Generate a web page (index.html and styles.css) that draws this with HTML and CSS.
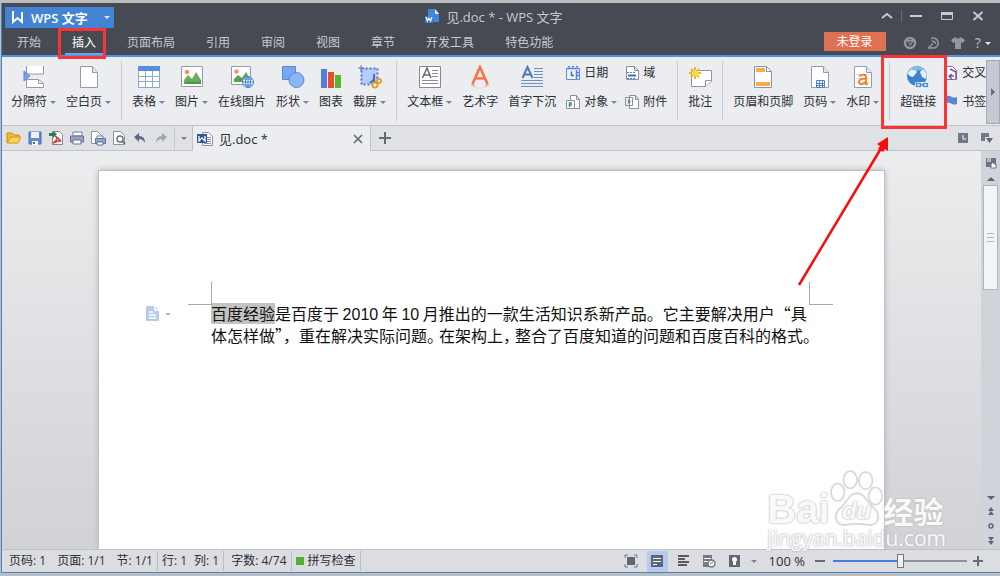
FILE: index.html
```html
<!DOCTYPE html>
<html lang="zh-CN">
<head>
<meta charset="utf-8">
<title>见.doc * - WPS 文字</title>
<link rel="stylesheet" href="styles.css">
</head>
<body>
<div class="window">
  <header class="header">
    <div class="titlebar">
      <button class="brand"><svg width="13" height="13" viewBox="0 0 13 13"><path d="M2 0v11l4.500-4 4.500 4V1" fill="none" stroke="#fff" stroke-width="2"/></svg><span>WPS 文字</span><i class="caret"></i></button>
      <div class="title"><svg width="15" height="15" viewBox="0 0 15 15"><path d="M3 0h7l4 4v9H3z" fill="#4287dc"/><path d="M10 0l4 5h-4z" fill="#e6f0ff"/><path d="M0 7h8v7H0z" fill="#367ad0"/><path d="M1 8l1.500 4L4 9l1.500 3L7 8" fill="none" stroke="#fff" stroke-width="1.200"/></svg><span>见.doc * - WPS 文字</span></div>
      <div class="controls">
        <button aria-label="收起功能区"><svg width="14" height="10" viewBox="0 0 14 10"><path d="M2 7l5-4 5 4" fill="none" stroke="#c5c9d0" stroke-width="2"/></svg></button>
        <span class="control-line"></span>
        <button aria-label="最小化"><svg width="14" height="10" viewBox="0 0 14 10"><path d="M1 5h12" stroke="#c5c9d0" stroke-width="2"/></svg></button>
        <button aria-label="最大化"><svg width="14" height="10" viewBox="0 0 14 10"><path d="M1.500 1.500h11v7h-11z" fill="none" stroke="#c5c9d0"/><path d="M1 2.500h12" stroke="#c5c9d0" stroke-width="3"/></svg></button>
        <button aria-label="关闭"><svg width="14" height="10" viewBox="0 0 14 10"><path d="M2.500 1l9 8M11.500 1l-9 8" stroke="#c5c9d0" stroke-width="2"/></svg></button>
      </div>
    </div>
    <div class="menubar">
      <nav class="tabs">
        <button>开始</button><button class="active">插入</button><button>页面布局</button><button>引用</button><button>审阅</button><button>视图</button><button>章节</button><button>开发工具</button><button>特色功能</button>
      </nav>
      <button class="login">未登录</button>
      <div class="tools">
        <button aria-label="应用"><svg width="14" height="14" viewBox="0 0 14 14"><circle cx="7" cy="7" r="5" fill="none" stroke="#92969e" stroke-width="2.500"/><path d="M3 4h8L7.500 10z" fill="#92969e"/><path d="M5 5.500h4L7 8z" fill="#464a52"/></svg></button>
        <button aria-label="同步"><svg width="14" height="14" viewBox="0 0 14 14"><path d="M4 2.500a5 5 0 1 1 0 9M1 12h5M1.500 11.500L6 7.500M4.500 5.500q4-1 4 2.500" fill="none" stroke="#92969e" stroke-width="1.600"/></svg></button>
        <button aria-label="皮肤"><svg width="14" height="14" viewBox="0 0 14 14"><path d="M4 1q3 3 6 0l4 3-2 3-2-1v7H4V6L2 7 0 4z" fill="#92969e"/></svg></button>
        <button aria-label="帮助" class="help">?<i class="caret"></i></button>
      </div>
    </div>
  </header>

  <section class="ribbon">
    <div class="ribbon-items">
      <button class="big"><svg width="24" height="24" viewBox="0 0 24 24"><path d="M4.500 1v8h17V1M4.500 22.500v-8h12l5 4v4z" fill="#fff" stroke="#9698ac"/><path d="M16.500 14.500v4h5" fill="none" stroke="#9698ac"/><path d="M2 6l6 5-6 5z" fill="#78a3ef" stroke="#5c86d6"/></svg><span>分隔符<i class="caret"></i></span></button>
      <button class="big"><svg width="24" height="24" viewBox="0 0 24 24"><path d="M3.500 1.500h12l5 6v15h-17z" fill="#fff" stroke="#9698ac"/><path d="M15.500 1.500v6h5" fill="#dfe1e9" stroke="#9698ac"/></svg><span>空白页<i class="caret"></i></span></button>
      <span class="line"></span>
      <button class="big"><svg width="24" height="24" viewBox="0 0 24 24"><path d="M1.500 2.500h21v20h-21z" fill="#fff" stroke="#8ba4d0"/><path d="M1 1h22v5H1z" fill="#568de0"/><path d="M1 11.500h22M1 16.500h22M8.500 6v17M15.500 6v17" stroke="#8eabd9"/></svg><span>表格<i class="caret"></i></span></button>
      <button class="big"><svg width="24" height="24" viewBox="0 0 24 24"><path d="M1.500 1.500h21v20h-21z" fill="#fff" stroke="#9698ac"/><circle cx="7" cy="7" r="2.300" fill="#fa8e61"/><path d="M4 19v-4l4-5 4 4 4-7 5 8v4z" fill="#6bad59"/><path d="M4 19c6-7 10 2 17-4v4z" fill="#449b4b"/></svg><span>图片<i class="caret"></i></span></button>
      <button class="big"><svg width="24" height="24" viewBox="0 0 24 24"><path d="M1.500 1.500h19v18h-19z" fill="#fff" stroke="#9698ac"/><circle cx="6.500" cy="6.500" r="2.200" fill="#fa8e61"/><path d="M4 17v-3l4-4 4 3 4-6 4 7v3z" fill="#55a353"/><circle cx="18" cy="17" r="5.500" fill="#fff" stroke="#427fce"/><path d="M13 17h10M18 12v10M14 14h8M14 20h8" stroke="#427fce"/><ellipse cx="18" cy="17" rx="2.500" ry="5" fill="none" stroke="#427fce"/></svg><span>在线图片</span></button>
      <button class="big"><svg width="24" height="24" viewBox="0 0 24 24"><path d="M1.500 1.500h13v13h-13z" fill="#76a7f0" stroke="#5288da"/><circle cx="15.500" cy="15" r="7.500" fill="#8bb6f5" stroke="#568bdc"/></svg><span>形状<i class="caret"></i></span></button>
      <button class="big"><svg width="24" height="24" viewBox="0 0 24 24"><path d="M2 4h6v19H2z" fill="#517fd9"/><path d="M9 7h6v16H9z" fill="#ed4c2c"/><path d="M16 10h6v13h-6z" fill="#59b52d"/></svg><span>图表</span></button>
      <button class="big"><svg width="24" height="24" viewBox="0 0 24 24"><path d="M3 3h16v16H3z" fill="#b5cdfa"/><path d="M3.500 3.500h16v16h-16z" fill="none" stroke="#5278c6" stroke-width="2" stroke-dasharray="2 2"/><path d="M3 0v6M0 3h6" stroke="#5278c6"/><path d="M16 9v6l-4 3M14 15l6 4" stroke="#446fbf" stroke-width="2" fill="none"/><circle cx="17" cy="20" r="2.500" fill="#fff" stroke="#e69e25" stroke-width="2"/><circle cx="21" cy="16" r="2" fill="#fff" stroke="#e69e25" stroke-width="2"/></svg><span>截屏<i class="caret"></i></span></button>
      <span class="line"></span>
      <button class="big"><svg width="24" height="24" viewBox="0 0 24 24"><path d="M1.500 1.500h21v21h-21z" fill="#fff" stroke="#85889a"/><path d="M4.500 13L9 3l4 10M6 10h6" fill="none" stroke="#676b78" stroke-width="1.500"/><path d="M14 5.500h6M14 8.500h6M14 11.500h6M4 15.500h16M4 18.500h16" stroke="#8a8e9c"/></svg><span>文本框<i class="caret"></i></span></button>
      <button class="big"><svg width="24" height="24" viewBox="0 0 24 24"><defs><linearGradient id="fade" x1="0" y1="0" x2="0" y2="1"><stop offset="0" stop-color="#f07248" stop-opacity=".6"/><stop offset="1" stop-color="#f07248" stop-opacity="0"/></linearGradient></defs><path d="M4.500 19L12 2l7.500 17M7 13.500h10" fill="none" stroke="#f3764c" stroke-width="2.600"/><path d="M3 19h3q1 4 6 4t6-4h3q-1 5-9 5t-9-5z" fill="url(#fade)"/></svg><span>艺术字</span></button>
      <button class="big"><svg width="24" height="24" viewBox="0 0 24 24"><path d="M2.500 13L7.500 2l5 11M4 9.500h7" fill="none" stroke="#5479b7" stroke-width="2"/><path d="M14 3.500h9M14 6.500h9M14 9.500h9M14 12.500h9M1 15.500h22M1 18.500h22M1 21.500h22" stroke="#7190c5"/></svg><span>首字下沉</span></button>
      <div class="pairs">
        <button class="small"><svg width="14" height="14" viewBox="0 0 14 14"><path d="M.5 2.500h13v11H.5z" fill="#edf4ff" stroke="#5e8cdc"/><path d="M1 2.500h12M2 .5h2M6 .5h2M10 .5h2M10.500 4v9M11 6.500h2M11 9.500h2" stroke="#5485db" stroke-width="1.500"/><path d="M5.500 5.500v4H8" fill="none" stroke="#496ead" stroke-width="1.500"/></svg><span>日期</span></button>
        <button class="small"><svg width="14" height="14" viewBox="0 0 14 14"><path d="M1.500.5h8l4 4v9h-12z" fill="#fff" stroke="#8b8da0"/><path d="M9.500.5v4h4" fill="none" stroke="#8b8da0"/><path d="M2 6.500h9M2 12.500h9" stroke="#5581d1" stroke-dasharray="2 1"/><path d="M3 9.500h8" stroke="#426dbd" stroke-width="2"/></svg><span>域</span></button>
        <button class="small"><svg width="14" height="14" viewBox="0 0 14 14"><path d="M4.500.5h6l3 4v9h-9z" fill="#fff" stroke="#8b8da0"/><path d="M10.500.5v4h3" fill="none" stroke="#8b8da0"/><path d="M.5 5.500h8v8h-8z" fill="#fff" stroke="#8b8da0"/><path d="M3.500 12V8H6M3 10h3" fill="none" stroke="#34a04c" stroke-width="1.500"/></svg><span>对象<i class="caret"></i></span></button>
        <button class="small"><svg width="14" height="14" viewBox="0 0 14 14"><path d="M4.500.5h6l3 4v9h-9z" fill="#fff" stroke="#8b8da0"/><path d="M10.500.5v4h3M.5 2.500h7v8h-7z" fill="none" stroke="#8b8da0"/><path d="M3 4l3 2.500L3 9z" fill="#787f94"/></svg><span>附件</span></button>
      </div>
      <span class="line"></span>
      <button class="big"><svg width="24" height="24" viewBox="0 0 24 24"><path d="M3.500 5.500h20v11l-6 5h-14z" fill="#fff" stroke="#9293a7"/><path d="M17.500 21.500v-6h6" fill="#fff" stroke="#9293a7"/><circle cx="7" cy="8" r="3" fill="#ffd84e"/><path d="M7 2v3M7 11v3M1 8h3M10 8h3M3 4l2 2M9 10l2 2M3 12l2-2M9 6l2-2" stroke="#efb81d" stroke-width="2"/></svg><span>批注</span></button>
      <span class="line"></span>
      <button class="big"><svg width="24" height="24" viewBox="0 0 24 24"><path d="M3.500 1.500h12l5 5v16h-17z" fill="#fff" stroke="#8f91a2"/><path d="M15.500 1.500v5h5" fill="none" stroke="#8f91a2"/><path d="M5 3h9v4H5zM5 17h14v4H5z" fill="#f5ac4c"/></svg><span>页眉和页脚</span></button>
      <button class="big"><svg width="24" height="24" viewBox="0 0 24 24"><path d="M3.500 1.500h12l5 6v15h-17z" fill="#fff" stroke="#9698ac"/><path d="M15.500 1.500v6h5" fill="#e5e7f0" stroke="#9698ac"/><path d="M8.500 15.500h8v7h-8zM11.500 15v8M14.500 15v8M8 18.500h9M8 20.500h9" fill="none" stroke="#507ed2"/></svg><span>页码<i class="caret"></i></span></button>
      <button class="big"><svg width="24" height="24" viewBox="0 0 24 24"><path d="M3.500 1.500h12l5 6v15h-17z" fill="#fff" stroke="#9698ac"/><path d="M15.500 1.500v6h5" fill="#e5e7f0" stroke="#9698ac"/><path d="M5 9.500h14M5 13.500h14M5 17.500h14" stroke="#dfdfe4"/><path d="M8 11q7-3 7 1v7M15 14q-7-1-7 3c0 4 6 2 7-1v3h2" fill="none" stroke="#ee8537" stroke-width="2"/></svg><span>水印<i class="caret"></i></span></button>
      <span class="line"></span>
      <button class="big"><svg width="24" height="24" viewBox="0 0 24 24"><circle cx="11" cy="11" r="10" fill="#3c83cf"/><path d="M2 8q3-6 9-6-2 3 0 5l-4 5q-5-1-5-4zM14 7l3-3q5 4 3 10l-4-2z" fill="#e4f3fd"/><path d="M4 4q7-6 14 0-7 3-14 0z" fill="#86bae9"/><rect x="9" y="17" width="14" height="6" rx="2" fill="#fff"/><path d="M10.500 18.500h4v3h-4zM17.500 18.500h4v3h-4zM14 20h4" fill="none" stroke="#4c89d0" stroke-width="1.500"/></svg><span>超链接</span></button>
      <div class="pairs last">
        <button class="small"><svg width="12" height="14" viewBox="0 0 12 14"><path d="M.5.500h6l4 4v9H.5z" fill="#fff" stroke="#8565ac"/><path d="M4 3l6 3v7M6 8l-3 2 3 3M3 10h5" fill="none" stroke="#7a56a4" stroke-width="1.500"/></svg><span>交叉</span></button>
        <button class="small"><svg width="12" height="14" viewBox="0 0 12 14"><path d="M0 1q3-1 6 1 2 1 5 0v7q-3 1-5 0-3-2-6-1z" fill="#5a86d7"/></svg><span>书签</span></button>
      </div>
    </div>
    <button class="ribbon-scroll" aria-label="更多"><svg width="4" height="8" viewBox="0 0 4 8"><path d="M0 0l4 4-4 4z" fill="#666c80"/></svg></button>
  </section>

  <div class="docbar">
    <div class="quick">
      <button aria-label="打开"><svg width="16" height="16" viewBox="0 0 16 16"><path d="M1 13V3h5l2 2h5v3" fill="#f4b72d" stroke="#d08a13"/><path d="M1 13l4-6h10l-3 6z" fill="#ffd35b" stroke="#d9951b"/></svg></button>
      <button aria-label="保存"><svg width="16" height="16" viewBox="0 0 16 16"><path d="M2 2h12v12H2z" fill="#638bd4" stroke="#456bb6"/><path d="M4 2h8v6H4z" fill="#e9f2ff"/><path d="M5 11h6v4H5z" fill="#fff"/><path d="M6 12h2v2H6z" fill="#45639a"/></svg></button>
      <button aria-label="输出为PDF"><svg width="16" height="16" viewBox="0 0 16 16"><path d="M4.500 1.500h7l3 3v10h-10z" fill="#fff" stroke="#85889a"/><path d="M7 6q4 2 6 6M9 7q0 4-4 6l8-3" fill="none" stroke="#dc3a3d" stroke-width="1.500"/><path d="M1 3h4V1l4 3-4 4V6H1z" fill="#268349"/></svg></button>
      <button aria-label="打印"><svg width="16" height="16" viewBox="0 0 16 16"><path d="M4 2h9v4H4z" fill="#fff" stroke="#73809c"/><path d="M1.500 6h13v6h-13z" fill="#98a5bf" stroke="#65748f"/><path d="M4 10h8v4H4z" fill="#fff" stroke="#65748f"/></svg></button>
      <button aria-label="打印文档"><svg width="16" height="16" viewBox="0 0 16 16"><path d="M1.500 1.500h6l4 4v8h-10z" fill="#fff" stroke="#8e92a4"/><path d="M7 6h6v3H7z" fill="#fff" stroke="#69809f"/><path d="M5.500 8.500h10v5h-10z" fill="#8da8d0" stroke="#58739d"/><path d="M7 12h6v3H7z" fill="#fff" stroke="#58739d"/></svg></button>
      <button aria-label="打印预览"><svg width="16" height="16" viewBox="0 0 16 16"><path d="M2.500 1.500h7l4 4v9h-11z" fill="#fff" stroke="#8e92a4"/><circle cx="9" cy="9" r="3" fill="#fff" stroke="#6d7382" stroke-width="1.500"/><path d="M11 11l3 3" stroke="#6d7382" stroke-width="2"/></svg></button>
      <button aria-label="撤销"><svg width="16" height="16" viewBox="0 0 16 16"><path d="M2 7l5-4v3q6 0 6 7-2-4-6-4v3z" fill="#596783"/></svg></button>
      <button aria-label="恢复"><svg width="16" height="16" viewBox="0 0 16 16"><path d="M14 7L9 3v3q-6 0-6 7 2-4 6-4v3z" fill="#a0a5b0"/></svg></button>
      <button class="more" aria-label="自定义"><i class="caret"></i></button>
    </div>
    <div class="doctab">
      <svg width="16" height="16" viewBox="0 0 16 16"><path d="M5.500 1.500h6l4 4v9h-10z" fill="#fff" stroke="#8e92a4"/><path d="M10 6.500h4M10 8.500h4M10 10.500h4M7 12.500h7" stroke="#8995af"/><path d="M0 3h10v9H0z" fill="#2e57a2"/><path d="M2 5v5l3-3 3 3V5" fill="none" stroke="#fff" stroke-width="1.300"/></svg>
      <span>见.doc *</span>
      <button aria-label="关闭标签"><svg width="10" height="10" viewBox="0 0 10 10"><path d="M1 1l8 8M9 1L1 9" stroke="#5f6778" stroke-width="1.600"/></svg></button>
    </div>
    <button class="newtab" aria-label="新建"><svg width="12" height="12" viewBox="0 0 12 12"><path d="M6 0v12M0 6h12" stroke="#626977" stroke-width="2"/></svg></button>
    <div class="docbar-end">
      <button aria-label="历史"><svg width="12" height="12" viewBox="0 0 12 12"><path d="M1 1h10v10H1z" fill="#717785"/><path d="M6 3v4h3" fill="none" stroke="#fff"/></svg></button>
      <button aria-label="标签列表"><svg width="12" height="12" viewBox="0 0 12 12"><path d="M0 1h8v4H4v4H0z" fill="#717785"/><path d="M5 6h7l-3.500 5z" fill="#5f6677"/></svg></button>
    </div>
  </div>

  <main class="workspace">
    <div class="canvas">
      <article class="page">
        <span class="crop crop-left"></span><span class="crop crop-right"></span>
        <button class="side-mark" aria-label="段落"><svg width="14" height="16" viewBox="0 0 14 16"><path d="M0 0h9l4 4v11H0z" fill="#b8cbea"/><path d="M9 0v4h4M3 6h4M3 9h7M3 12h7" fill="none" stroke="#fff" stroke-width="1.500"/></svg><i class="caret"></i></button>
        <p><mark>百度经验</mark>是百度于 <span class="latin">2010</span> 年 <span class="latin">10</span> 月推出的一款生活知识系新产品。它主要解决用户“具</p>
        <p>体怎样做<span class="half">”</span>，重在解决实际问题<span class="half stop">。</span>在架构上<span class="half stop">，</span>整合了百度知道的问题和百度百科的格式<span class="half stop">。</span></p>
      </article>
    </div>
    <div class="scrollbar">
      <svg width="12" height="12" viewBox="0 0 12 12"><path d="M1 1h10v9H1z" fill="#6b7182"/><path d="M3 1v4M5 1v4" stroke="#fff"/><path d="M6 11V7l2-2 1 2h2v4z" fill="#fff" stroke="#6b7182"/></svg>
      <i class="up"></i>
      <div class="thumb"><i></i><i></i><i></i></div>
      <div class="jump">
        <i class="down"></i>
        <svg width="8" height="8" viewBox="0 0 8 8"><path d="M1 4l3-4 3 4zM1 8l3-4 3 4z" fill="#5c657d"/></svg>
        <svg width="8" height="8" viewBox="0 0 8 8"><circle cx="4" cy="4" r="2" fill="none" stroke="#5c657d" stroke-width="1.500"/></svg>
        <svg width="8" height="8" viewBox="0 0 8 8"><path d="M1 0l3 4 3-4zM1 4l3 4 3-4z" fill="#5c657d"/></svg>
      </div>
    </div>
    <div class="watermark">
      <div class="wm-top"><span class="wm-bai">Bai</span><span class="wm-paw"><svg width="54" height="58" viewBox="1 1 56 58"><g fill="#fff" stroke="#dadada" stroke-width="2"><ellipse cx="9" cy="24" rx="7" ry="9"/><ellipse cx="22" cy="11" rx="7" ry="9"/><ellipse cx="38" cy="12" rx="7" ry="9"/><ellipse cx="48" cy="28" rx="7" ry="9"/><path d="M29 25c-8 0-10 9-17 15-8 7-6 18 4 18q13-2 26 0c10 0 12-11 4-18-7-6-9-15-17-15z"/></g></svg><b>du</b></span><span class="wm-cn">经验</span></div>
      <div class="wm-url">jingyan.baidu.com</div>
    </div>
  </main>

  <footer class="status">
    <div class="cell"><span>页码: 1</span><span>页面: 1/1</span><span>节: 1/1</span></div>
    <div class="cell near"><span>行: 1</span><span>列: 1</span></div>
    <div class="cell"><span>字数: 4/74</span></div>
    <div class="cell near"><button class="spell"><i></i>拼写检查</button></div>
    <div class="views">
      <button aria-label="全屏"><svg width="14" height="14" viewBox="0 0 14 14"><path d="M3 3h8v8H3z" fill="#606777"/><path d="M1 4V1h3M10 1h3v3M13 10v3h-3M4 13H1v-3" fill="none" stroke="#6f7583"/></svg></button>
      <button class="on" aria-label="页面视图"><svg width="14" height="14" viewBox="0 0 14 14"><path d="M1 1h12v12H1z" fill="#5c6579"/><path d="M3 4.500h8M3 7.500h8M3 10.500h4" stroke="#fff"/></svg></button>
      <button aria-label="大纲视图"><svg width="14" height="14" viewBox="0 0 14 14"><path d="M2 2h11M2 5h7M2 8h11M2 11h9" stroke="#2e3035" stroke-width="1.500"/></svg></button>
      <button aria-label="网页视图"><svg width="14" height="14" viewBox="0 0 14 14"><path d="M1 1h9v12H1z" fill="#747a88"/><path d="M2 4.500h7M2 7.500h4" stroke="#fff"/><circle cx="9.500" cy="9.500" r="3.500" fill="#fff" stroke="#737986" stroke-width="1.500"/><path d="M8 10l4-3" stroke="#737986"/></svg></button>
      <button aria-label="护眼模式"><svg width="14" height="14" viewBox="0 0 14 14"><path d="M1 1h11v12H1z" fill="#606777"/><circle cx="6.500" cy="5.500" r="2.500" fill="#fff"/><path d="M5 8h3v3H5z" fill="#fff"/></svg></button>
      <i class="caret"></i>
    </div>
    <label class="percent" for="zoom">100 %</label>
    <button class="step" aria-label="缩小"><svg width="10" height="10" viewBox="0 0 10 10"><path d="M0 5h10" stroke="#636b7d" stroke-width="2"/></svg></button>
    <input id="zoom" type="range" min="0" max="100" value="50">
    <button class="step" aria-label="放大"><svg width="10" height="10" viewBox="0 0 10 10"><path d="M0 5h10M5 0v10" stroke="#636b7d" stroke-width="2"/></svg></button>
  </footer>
  <svg class="notes" width="1000" height="300" viewBox="0 0 1000 300"><g fill="none" stroke="#fa3434" stroke-width="3"><path d="M59.500 29.500h45v28h-45zM882.500 56.500h63v71h-63z"/></g><path d="M799 285L883 145" stroke="#f80d0d" stroke-width="2.500"/><path d="M888 137v14l-3-2-2 3-5-3 2-3-3-2z" fill="#f80d0d"/></svg>
</div>
</body>
</html>
```
FILE: styles.css
```css
* { box-sizing: border-box; }
body {
  margin: 0;
  height: 100vh;
  padding: 3px 0 3px 1px;
  background: #bcbcbc;
  color: #2b2e35;
  font: 12px/16px "Open Sans", "Noto Sans CJK SC", sans-serif;
  overflow: hidden;
}
button {
  margin: 0;
  padding: 0;
  border: 0;
  background: none;
  color: inherit;
  font: inherit;
  white-space: nowrap;
}
svg { display: block; flex: none; }
.caret {
  display: inline-block;
  flex: none;
  border: 3px solid transparent;
  border-top-color: #7b8192;
  border-bottom: 0;
}
.window {
  display: flex;
  flex-direction: column;
  height: 100%;
  border-left: 1px solid #4585cf;
  border-bottom: 1px solid #4585cf;
}

.header {
  padding-top: 4px;
  background: #464a52;
  border-bottom: 2px solid #4f92e6;
  color: #c6c9cf;
}
.titlebar {
  display: grid;
  grid-template-columns: 1fr auto 1fr;
  height: 21px;
}
.brand {
  display: flex;
  align-items: center;
  justify-self: start;
  gap: 7px;
  margin-left: 3px;
  padding: 0 4px 0 6px;
  background: #4283d4;
  color: #fff;
  font-size: 13px;
  font-weight: 600;
}
.brand .caret { margin-left: 9px; }
.brand .caret, .help .caret { border-top-color: #e4e7ec; }
.title {
  display: flex;
  align-items: center;
  gap: 6px;
  height: 19px;
  padding-right: 14px;
  font-size: 13px;
}
.controls {
  display: flex;
  align-items: center;
  justify-content: flex-end;
  gap: 17px;
  height: 18px;
  padding-right: 15px;
}
.control-line {
  width: 1px;
  height: 12px;
  margin: 0 -10px;
  background: #646973;
}
.menubar {
  display: flex;
  align-items: center;
  height: 27px;
}
.tabs { display: flex; flex: 1; align-self: stretch; }
.tabs button { position: relative; padding: 3px 16px 0 15px; }
.tabs .active { color: #fff; }
.tabs .active::after {
  content: "";
  position: absolute;
  right: 8px;
  bottom: 0;
  left: 8px;
  height: 2px;
  background: #69a4f0;
}
.login {
  width: 62px;
  height: 19px;
  background: #df7052;
  color: #fff;
}
.tools {
  display: flex;
  align-items: center;
  gap: 10px;
  padding: 3px 9px 0 17px;
}
.help {
  display: flex;
  align-items: center;
  gap: 4px;
  color: #a3a7af;
  font-size: 14px;
  font-weight: 600;
}

.ribbon {
  display: flex;
  height: 68px;
  background: #ebedf0;
}
.ribbon-items {
  display: flex;
  flex: 1;
  min-width: 0;
  gap: 10px;
  padding: 8px 0 0 9px;
  overflow: hidden;
}
.big {
  display: flex;
  flex: none;
  flex-direction: column;
  align-items: center;
  gap: 5px;
  align-self: flex-start;
}
.big span, .small span {
  display: flex;
  align-items: center;
  gap: 3px;
}
.line {
  flex: none;
  width: 1px;
  height: 60px;
  margin-top: -4px;
  background: #c9ccd2;
}
.pairs {
  display: grid;
  flex: none;
  grid-template-columns: auto auto;
  grid-auto-rows: 16px;
  gap: 13px 8px;
  align-self: flex-start;
}
.pairs.last { grid-template-columns: auto; }
.small { display: flex; align-items: center; gap: 4px; }
.ribbon-scroll {
  display: grid;
  place-items: center;
  width: 14px;
  margin: 3px 0 1px;
  border: 1px solid #a5a9b5;
  background: #c6c9d1;
}

.docbar {
  display: flex;
  height: 26px;
  border-top: 1px solid #c1c3c9;
  background: #dfe1e5;
}
.quick, .newtab, .docbar-end { border-bottom: 1px solid #c1c3c9; }
.quick {
  display: flex;
  align-items: center;
  gap: 5px;
  padding-left: 4px;
}
.more {
  display: grid;
  place-items: center;
  width: 18px;
  height: 22px;
  border-left: 1px solid #c6c8ce;
}
.doctab {
  display: flex;
  align-items: center;
  gap: 6px;
  width: 179px;
  padding: 0 7px 0 4px;
  border: solid #c1c3c9;
  border-width: 0 1px;
  background: #ebedf0;
  font-size: 13px;
}
.doctab button { margin-left: auto; }
.newtab { padding: 0 8px; }
.docbar-end {
  display: flex;
  flex: 1;
  align-items: center;
  justify-content: flex-end;
  gap: 12px;
  padding-right: 7px;
}

.workspace {
  position: relative;
  display: flex;
  flex: 1;
  min-height: 0;
  background: linear-gradient(#ebedef, #d1d2d5);
}
.canvas { flex: 1; min-width: 0; padding: 19px 96px 0; overflow: hidden; }
.page {
  position: relative;
  height: 100%;
  padding: 132px 75px 0 112px;
  border: solid #bfc1c5;
  border-width: 1px 1px 0;
  background: #fff;
  box-shadow: 0 0 6px #b5b7bb;
  color: #111;
  font: 16px/21px "Noto Sans CJK SC", sans-serif;
}
.page p { margin: 0; white-space: nowrap; }
.page mark {
  display: inline-block;
  background: #c3c3c3;
  color: inherit;
}
.latin { font-family: "Liberation Sans", sans-serif; }
.half { font-feature-settings: "halt"; }
.stop { margin-right: 4px; }
.crop {
  position: absolute;
  top: 111px;
  width: 24px;
  height: 23px;
  border-bottom: 1px solid #a9a9a9;
}
.crop-left { left: 89px; border-right: 1px solid #a9a9a9; }
.crop-right { right: 51px; border-left: 1px solid #a9a9a9; }
.side-mark {
  position: absolute;
  top: 135px;
  left: 47px;
  display: flex;
  align-items: center;
  gap: 5px;
}
.side-mark .caret { border-top-color: #b4b8c2; }

.scrollbar {
  display: flex;
  flex-direction: column;
  align-items: center;
  width: 19px;
  padding: 6px 0 4px;
  background: #d0d3da;
}
.up {
  margin: 8px 0 4px;
  border: 4px solid transparent;
  border-bottom-color: #59627a;
  border-top: 0;
}
.thumb {
  display: flex;
  flex-direction: column;
  align-items: center;
  justify-content: center;
  gap: 3px;
  width: 15px;
  height: 105px;
  border: 1px solid #b1b4bc;
  background: #f3f4f5;
}
.thumb i { width: 7px; height: 1px; background: #b6b8be; }
.jump {
  display: flex;
  flex-direction: column;
  align-items: center;
  gap: 7px;
  margin-top: auto;
}
.down {
  border: 4px solid transparent;
  border-top-color: #59627a;
  border-bottom: 0;
}

.watermark {
  position: absolute;
  right: 54px;
  bottom: 0;
  color: #f9f9f9;
  text-shadow: 0 0 2px #b9b9b9, 0 0 2px #c4c4c4;
  white-space: nowrap;
}
.wm-top { display: flex; align-items: flex-end; height: 60px; }
.wm-bai { font: bold 40px/36px "Liberation Sans", sans-serif; }
.wm-paw { position: relative; }
.wm-paw b {
  position: absolute;
  right: 0;
  bottom: 4px;
  left: 0;
  font: italic bold 24px/24px "Liberation Sans", sans-serif;
  text-align: center;
}
.wm-cn { font: bold 30px/34px "Noto Sans CJK SC", sans-serif; }
.wm-url { font: 21px/22px "Open Sans", sans-serif; }

.status {
  display: flex;
  align-items: center;
  height: 23px;
  border-top: 1px solid #bfc1c6;
  background: #dcdde1;
}
.cell {
  display: flex;
  gap: 11px;
  padding: 2px 4px 2px 7px;
  border-right: 1px solid #bbbdc3;
}
.cell.near { gap: 7px; padding-left: 4px; }
.spell { display: flex; align-items: center; gap: 4px; }
.spell i { width: 8px; height: 8px; background: #55ae35; }
.views {
  display: flex;
  align-items: center;
  gap: 5px;
  margin-left: auto;
}
.views button {
  display: grid;
  place-items: center;
  width: 21px;
  height: 21px;
}
.views .on { background: #b9cbec; }
.percent { margin: 0 10px 0 12px; font-size: 13px; }
.step { width: 10px; }
#zoom {
  width: 134px;
  height: 16px;
  margin: 0 6px 0 8px;
  appearance: none;
  background: linear-gradient(90deg, #427fe0 50%, #8b909c 50%) center / 100% 2px no-repeat;
}
#zoom::-webkit-slider-thumb {
  appearance: none;
  width: 7px;
  height: 14px;
  border: 1px solid #707580;
  background: #f1f2f4;
}
.status .step:last-child { margin-right: 17px; }
.notes {
  position: absolute;
  top: 0;
  left: 0;
  pointer-events: none;
}
```
